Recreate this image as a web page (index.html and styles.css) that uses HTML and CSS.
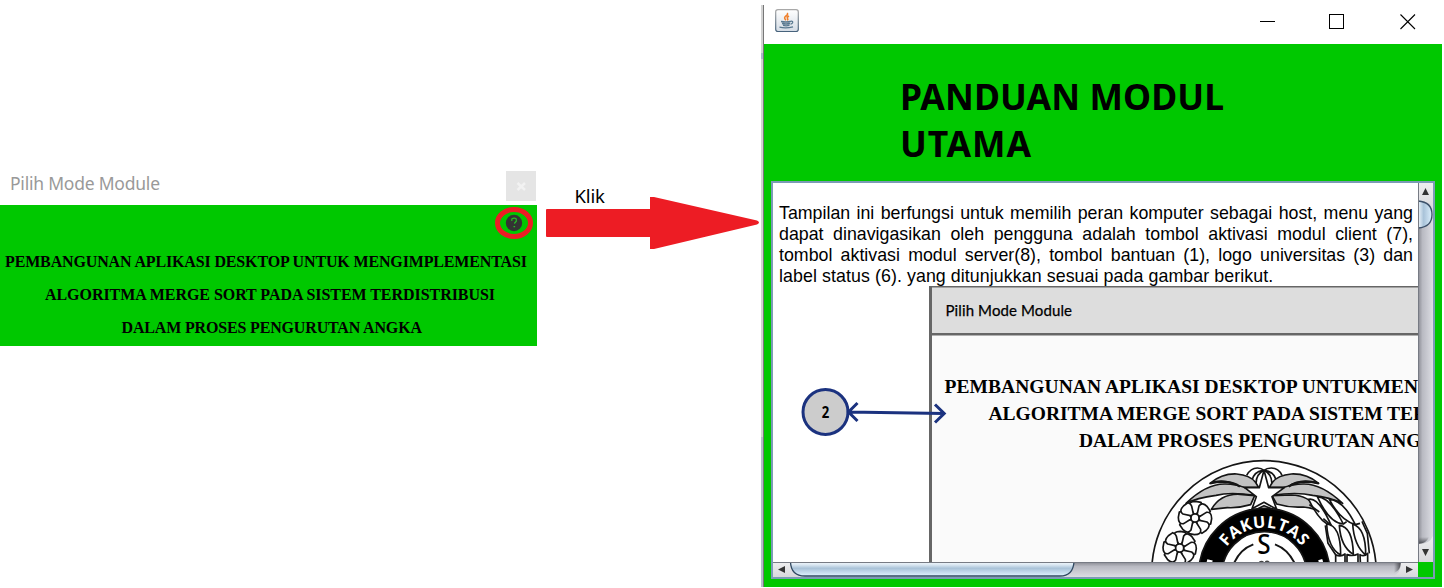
FILE: index.html
```html
<!DOCTYPE html>
<html lang="id">
<head>
<meta charset="utf-8">
<title>Panduan Modul Utama</title>
<link rel="stylesheet" href="styles.css">
</head>
<body>
<main class="stage">
  <section class="picker">
    <header class="picker-bar">
      <svg class="picker-title" width="170" height="34"><text x="10" y="25" textLength="150">Pilih Mode Module</text></svg>
      <button class="picker-close" aria-label="Tutup"><svg width="30" height="30"><path d="M11.500 12l7.500 7M19 12l-7.500 7"/></svg></button>
    </header>
    <div class="picker-body">
      <svg class="picker-art" width="537" height="141">
        <ellipse cx="514" cy="18" rx="16.500" ry="13.500" fill="none" stroke="#ed1c24" stroke-width="5"/>
        <circle cx="514" cy="18" r="8.200" fill="#333"/>
        <path d="M511.800 16v-2q2.500-1.700 4.500 0v2.200l-2 2.300M513.500 21.700h1.600" fill="none" stroke="#25bd25" stroke-width="1.200"/>
        <g class="picker-text">
          <text x="5" y="62" textLength="522">PEMBANGUNAN APLIKASI DESKTOP UNTUK MENGIMPLEMENTASI</text>
          <text x="45" y="95" textLength="450">ALGORITMA MERGE SORT PADA SISTEM TERDISTRIBUSI</text>
          <text x="121.500" y="128" textLength="300.500">DALAM PROSES PENGURUTAN ANGKA</text>
        </g>
      </svg>
    </div>
  </section>

  <div class="pointer">
    <svg width="224" height="80" viewBox="537 180 224 80">
      <text x="574.500" y="203" textLength="30.500" class="klik">Klik</text>
      <path d="M547 209H650V197H654L757 220.500Q761 222.500 757 224.500L654 249H650V237H547Q546 237 546 236V210Q546 209 547 209Z" fill="#ed1c24"/>
    </svg>
  </div>

  <section class="guide">
    <div class="guide-edge"><i class="edge-white"></i><i class="edge-blue"></i><i class="edge-grey"></i><i class="edge-low"></i></div>
    <div class="guide-window">
      <header class="guide-bar">
        <svg class="java" width="24" height="24">
          <defs><linearGradient id="tile" x2="0" y2="1"><stop offset="0" stop-color="#fff"/><stop offset="1" stop-color="#d4dce5"/></linearGradient>
          <linearGradient id="rim" x2="0" y2="1"><stop offset="0" stop-color="#a8a8a8"/><stop offset="1" stop-color="#47637c"/></linearGradient></defs>
          <rect x=".7" y=".7" width="22.600" height="21.800" rx="2.200" fill="url(#tile)" stroke="url(#rim)" stroke-width="1.200"/>
          <path d="M12.200 4q1.200 1.500-1.500 3.200-2.200 1.700 .2 4.100M14 7q-2.400 1.300-1.500 2.400.8 1-.2 2" fill="none" stroke="#f0802c" stroke-width="1.600"/>
          <path d="M6 12.500q5 1 9.500 0M7 14.500q4 1 8 0M8 16.400q3 .8 6.500 0M15.500 12.300q3-.5 2 1.500-.7 1-2 1.300M4.500 18.200q6.500 1.600 13.500-.4" fill="none" stroke="#58788f" stroke-width="1.300"/>
        </svg>
        <svg class="controls" width="156" height="16" shape-rendering="crispEdges">
          <path d="M0 7.500h15M69.500 .5h14v14h-14z" fill="none" stroke="#000"/>
          <path d="M140.500 .5l14.500 14.500M155 .5l-14.500 14.500" fill="none" stroke="#000" stroke-width="1.100" shape-rendering="auto"/>
        </svg>
      </header>
      <div class="guide-body">
        <h1 class="heading">
          <svg width="340" height="100"><text x="0" y="37" textLength="324">PANDUAN MODUL</text><text x="0" y="84" textLength="131">UTAMA</text></svg>
        </h1>
        <div class="pane">
          <article class="page">
            <p class="lead">
              <span>Tampilan ini berfungsi untuk memilih peran komputer sebagai host, menu yang</span>
              <span>dapat dinavigasikan oleh pengguna adalah tombol aktivasi modul client (7),</span>
              <span>tombol aktivasi modul server(8), tombol bantuan (1), logo universitas (3) dan</span>
              <span class="last">label status (6). yang ditunjukkan sesuai pada gambar berikut.</span>
            </p>
            <svg class="diagram" width="645" height="276" viewBox="773 286 645 276">
              <path d="M929 286H1418V562H929Z" fill="#666"/>
              <path d="M932 287.500H1418V333H932Z" fill="#ddd"/>
              <path d="M932 335.500H1418V562H932Z" fill="#fafafa"/>
              <text class="mock-title" x="945.500" y="316" textLength="126.500">Pilih Mode Module</text>
              <g class="mock-text">
                <text x="944.500" y="393" textLength="473.500">PEMBANGUNAN APLIKASI DESKTOP UNTUKMEN</text>
                <text x="988.500" y="420">ALGORITMA MERGE SORT PADA SISTEM TERDISTRIBUSI</text>
                <text x="1079" y="447">DALAM PROSES PENGURUTAN ANGKA</text>
              </g>
              <g fill="none" stroke="#1b327f" stroke-width="3">
                <circle cx="825.500" cy="412" r="22.500" fill="#ccc"/>
                <path d="M848 412L944 413.500M857.500 403l-9 9 9 9M935 404.500l9.200 9-9.200 9"/>
              </g>
              <text class="badge" x="821.700" y="418" textLength="7.500" lengthAdjust="spacingAndGlyphs">2</text>

              <g transform="translate(1130 440) scale(.33333)" stroke="#151515" stroke-width="5" stroke-linejoin="round">
                <circle cx="402" cy="399" r="337" fill="#fff"/>
                <circle cx="403" cy="402" r="197" fill="#000"/>
                <circle cx="403" cy="402" r="127" fill="#fff"/>
                <!-- ribbon behind the star -->
                <path d="M350 106Q362 84 382 84Q394 84 402 91Q410 84 424 84Q446 84 456 106M366 121Q372 95 398 91M438 121Q432 95 404 91M379 140Q374 105 402 91M425 140Q430 105 402 91" fill="#fff"/>
                <!-- leaves -->
                <g fill="#c3c3c3">
                  <path d="M240 130Q276 100 320 102Q360 106 376 126L386 142H330Q285 112 240 130Z"/>
                  <path d="M168 190Q230 130 287 132Q350 134 374 166Q300 155 258 166Q200 174 168 190Z"/>
                  <path d="M244 208Q272 160 330 163L374 167L362 194Q325 205 292 203Z"/>
                  <path d="M566 130Q530 100 484 102Q444 106 428 126L418 142H472Q510 112 566 130Z"/>
                  <path d="M638 190Q574 130 519 132Q456 134 426 166Q500 155 548 166Q600 172 638 190Z"/>
                  <path d="M568 216Q540 165 484 165L426 167L440 192Q480 204 520 201Q545 202 568 216Z"/>
                </g>
                <path d="M240 130Q300 118 330 140M566 130Q506 118 476 140" fill="none" stroke-width="7"/>
                <!-- grain ears -->
                <g fill="#fff">
                  <path d="M536 178Q565 170 604 257Q570 249 536 178ZM562 170Q600 172 640 252Q598 250 562 170ZM598 178Q640 180 676 254Q630 240 598 178Z"/>
                  <path d="M590 252Q632 255 632 345Q594 325 590 252ZM628 256Q668 260 670 343Q632 320 628 256ZM668 252Q708 265 707 345Q672 316 668 252Z"/>
                  <path d="M617 344Q632 352 645 342V385H617ZM651 344Q669 350 684 342V385H651ZM690 344Q702 352 713 340V385H692Z"/>
                </g>
                <path d="M538 194L568 216M580 236L604 257M586 256L594 310L617 344M696 244L712 280L718 340M640 252L650 245M676 254L690 250" fill="none"/>
                <path d="M402 91L416 143H463L426 170L440 208L402 187L366 206L379 170L344 143H388Z" fill="#fff"/>
                <path d="M382 207L402 197L426 207" fill="none"/>
                <!-- eight-petal flowers -->
                <g transform="translate(195 234)">
                  <g id="flower" fill="#fff">
                    <path id="petal" d="M-3-12L-17-34Q-20-50 2-50L18-47Q22-38 18-32L5-12Z"/>
                    <use href="#petal" transform="rotate(45)"/><use href="#petal" transform="rotate(90)"/><use href="#petal" transform="rotate(135)"/><use href="#petal" transform="rotate(180)"/><use href="#petal" transform="rotate(225)"/><use href="#petal" transform="rotate(270)"/><use href="#petal" transform="rotate(315)"/>
                    <circle r="12"/>
                  </g>
                </g>
                <use href="#flower" transform="translate(149 324)"/>
                <!-- ring lettering -->
                <path id="ring" d="M264 402A139 139 0 0 1 542 402" fill="none" stroke="none"/>
                <text class="ring-text" stroke="none"><textPath href="#ring" startOffset="50%" text-anchor="middle">FAKULTAS</textPath></text>
                <path d="M231 362L247 366M566 365L578 361" stroke="#fff" stroke-width="9"/>
                <text class="seal-letter" x="382" y="341" textLength="40" lengthAdjust="spacingAndGlyphs" stroke="none">S</text>
                <path d="M312 370Q330 328 370 313M435 313Q474 328 494 370" fill="none" stroke-width="6"/>
                <path d="M388 367Q394 363 400 366M406 366Q412 362 417 367" fill="none" stroke="#444"/>
              </g>
            </svg>
          </article>
          <div class="vbar">
            <svg width="15" height="379">
              <defs>
                <linearGradient id="trackV"><stop offset="0" stop-color="#888991"/><stop offset=".3" stop-color="#b9bac2"/><stop offset="1" stop-color="#dcdde3"/></linearGradient>
                <linearGradient id="button" x2="0" y2="1"><stop offset="0" stop-color="#eeeeef"/><stop offset="1" stop-color="#d8d8dc"/></linearGradient>
                <linearGradient id="thumbV"><stop offset="0" stop-color="#eff6fb"/><stop offset=".4" stop-color="#a9c3d9"/><stop offset="1" stop-color="#dceffc"/></linearGradient>
                <linearGradient id="shadeV" x2="0" y2="1"><stop offset="0" stop-color="#55565c" stop-opacity="0"/><stop offset="1" stop-color="#45464c"/></linearGradient>
                <linearGradient id="shadeH"><stop offset="0" stop-color="#55565c" stop-opacity="0"/><stop offset="1" stop-color="#45464c"/></linearGradient>
              </defs>
              <rect width="15" height="379" fill="url(#trackV)"/>
              <path d="M0 0H15V28Q15 18 0 18Z" fill="url(#button)"/>
              <path d="M0 18Q14 19 14 31.500Q14 44 0 45" fill="url(#thumbV)" stroke="#3c5069" stroke-width="1.300"/>
              <path d="M0 361V354H11Q8 361 0 361" fill="url(#shadeV)"/>
              <path d="M0 361Q12 361 15 353V379H0Z" fill="url(#button)"/>
              <path d="M4 12L7.500 5 11 12ZM4 366L7.500 373 11 366Z" fill="#333"/>
              <path d="M.5 0V379" stroke="#777b84"/>
            </svg>
          </div>
          <div class="hbar">
            <svg width="645" height="15">
              <defs>
                <linearGradient id="trackH" x2="0" y2="1"><stop offset="0" stop-color="#888991"/><stop offset=".3" stop-color="#b9bac2"/><stop offset="1" stop-color="#dcdde3"/></linearGradient>
                <linearGradient id="thumbH" x2="0" y2="1"><stop offset="0" stop-color="#f2f8fc"/><stop offset=".2" stop-color="#dbe8f2"/><stop offset=".45" stop-color="#a9c2d8"/><stop offset="1" stop-color="#e0f3ff"/></linearGradient>
              </defs>
              <rect width="645" height="15" fill="url(#trackH)"/>
              <path d="M0 0H17Q18 12 30 15H0Z" fill="url(#button)"/>
              <path d="M17.500 0Q18 14 32 14H287Q300 14 301 0" fill="url(#thumbH)" stroke="#2f4860" stroke-width="1.300"/>
              <path d="M621 0H628Q628 8 621 11Z" fill="url(#shadeH)"/>
              <path d="M628 0Q628 12 619 15H645V0Z" fill="url(#button)"/>
              <path d="M12 4L5 7.500 12 11ZM633 4L640 7.500 633 11Z" fill="#333"/>
              <path d="M0 .5H645" stroke="#777b84"/>
            </svg>
          </div>
          <div class="corner"></div>
        </div>
      </div>
    </div>
  </section>
</main>
</body>
</html>
```
FILE: styles.css
```css
* { box-sizing: border-box; }
body { margin: 0; background: #fff; overflow: hidden; font-family: "Liberation Sans", Arial, sans-serif; }
svg { display: block; }
.stage { display: flex; width: 1444px; height: 588px; }

.picker { width: 537px; padding-top: 165px; }
.picker-bar { display: flex; justify-content: space-between; height: 40px; padding-right: 1px; }
.picker-title text { font: 17.5px "Noto Sans", "Open Sans", sans-serif; fill: #999; }
.picker-close { width: 30px; height: 30px; margin-top: 6px; padding: 0; border: 0; background: #e5e5e5; }
.picker-close path { stroke: #f2f2f2; stroke-width: 2.4; }
.picker-body { height: 141px; background: #00c800; }
.picker-text { font: bold 16px "Liberation Serif", "Times New Roman", serif; }

.pointer { width: 224px; padding-top: 180px; }
.klik { font: 18.5px "Noto Sans", "Open Sans", sans-serif; }

.guide { display: flex; width: 681px; height: 587px; }
.guide-edge { display: flex; flex-direction: column; width: 3px; border-right: 1px solid #777; margin-top: 5px; }
.guide-edge i { display: block; background: #d2d2d2; }
.edge-white { height: 48px; }
.guide-edge .edge-blue { height: 6px; background: #a9b4ca; }
.edge-grey { height: 378px; }
.guide-edge .edge-low { flex: 1; background: #b5bccb; }
.guide-window { width: 678px; }
.guide-bar { display: flex; justify-content: space-between; height: 44px; padding: 9px 26px 0 11px; }
.controls { margin-top: 5px; }
.guide-body { height: 543px; padding: 29px 7px 8px; background: #00c800; }
.heading { height: 108px; margin: 0; padding-left: 128.5px; }
.heading text { font: bold 35.5px "Noto Sans", "Open Sans", sans-serif; }

.pane { display: grid; grid-template: 379px 15px / 645px 15px; width: 664px; height: 398px; border: 2px solid #7b9bb5; }
.page { overflow: hidden; background: #fff; }
.lead { height: 103px; margin: 0; padding: 20px 5px 0 6px; font-size: 17.8px; line-height: 21px; color: #000; }
.lead span { display: block; height: 21px; white-space: nowrap; text-align: justify; text-align-last: justify; }
.lead .last { width: 494px; letter-spacing: .08px; }
.mock-title { font: 15px Lato, sans-serif; stroke: #000; stroke-width: .25px; }
.mock-text { font: bold 19.5px "Liberation Serif", "Times New Roman", serif; }
.badge { font: bold 16px "Open Sans", sans-serif; }
.ring-text { font: bold 49px "Open Sans", sans-serif; letter-spacing: 2px; fill: #fff; }
.seal-letter { font: 500 82px "Noto Sans", sans-serif; }
.corner { background: #00c800; }
```
